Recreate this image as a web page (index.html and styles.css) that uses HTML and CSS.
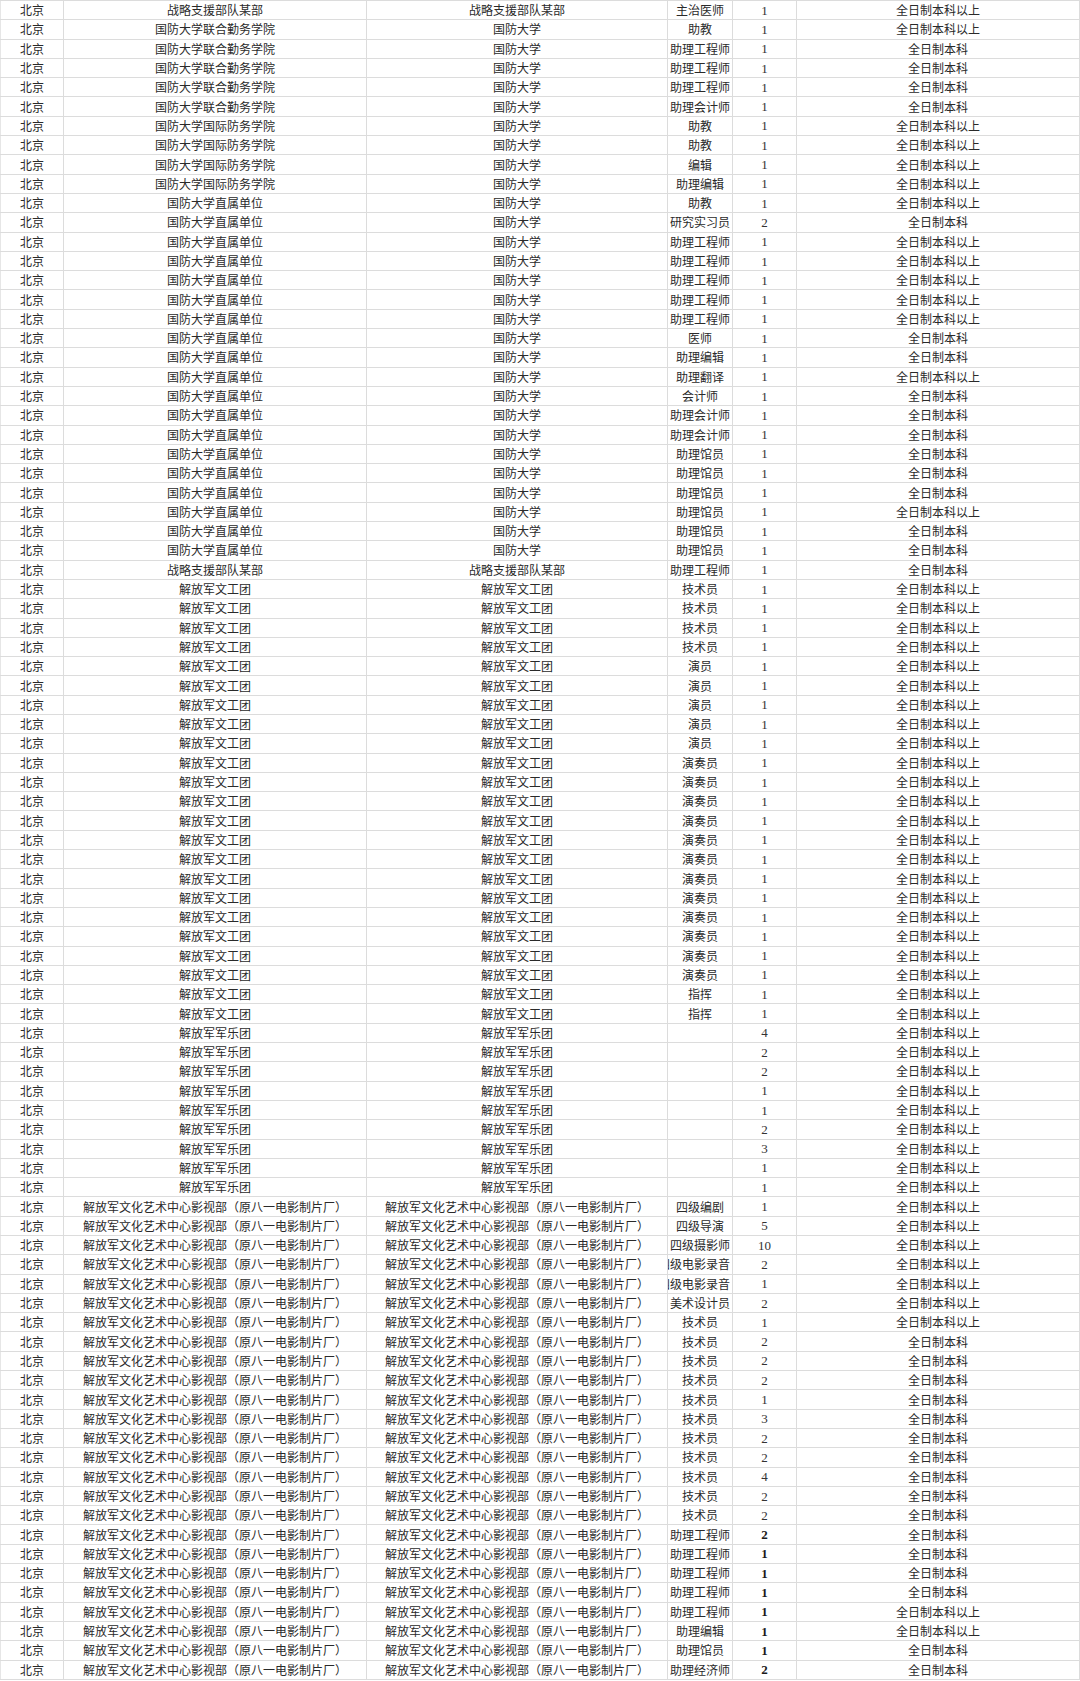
FILE: index.html
```html
<!DOCTYPE html>
<html lang="zh-CN">
<head>
<meta charset="utf-8">
<title>岗位表</title>
<link rel="stylesheet" href="styles.css">
</head>
<body>
<div class="sheet">
<div class="r"><span>北京</span><span>战略支援部队某部</span><span>战略支援部队某部</span><span>主治医师</span><span class="n">1</span><span>全日制本科以上</span></div>
<div class="r"><span>北京</span><span>国防大学联合勤务学院</span><span>国防大学</span><span>助教</span><span class="n">1</span><span>全日制本科以上</span></div>
<div class="r"><span>北京</span><span>国防大学联合勤务学院</span><span>国防大学</span><span>助理工程师</span><span class="n">1</span><span>全日制本科</span></div>
<div class="r"><span>北京</span><span>国防大学联合勤务学院</span><span>国防大学</span><span>助理工程师</span><span class="n">1</span><span>全日制本科</span></div>
<div class="r"><span>北京</span><span>国防大学联合勤务学院</span><span>国防大学</span><span>助理工程师</span><span class="n">1</span><span>全日制本科</span></div>
<div class="r"><span>北京</span><span>国防大学联合勤务学院</span><span>国防大学</span><span>助理会计师</span><span class="n">1</span><span>全日制本科</span></div>
<div class="r"><span>北京</span><span>国防大学国际防务学院</span><span>国防大学</span><span>助教</span><span class="n">1</span><span>全日制本科以上</span></div>
<div class="r"><span>北京</span><span>国防大学国际防务学院</span><span>国防大学</span><span>助教</span><span class="n">1</span><span>全日制本科以上</span></div>
<div class="r"><span>北京</span><span>国防大学国际防务学院</span><span>国防大学</span><span>编辑</span><span class="n">1</span><span>全日制本科以上</span></div>
<div class="r"><span>北京</span><span>国防大学国际防务学院</span><span>国防大学</span><span>助理编辑</span><span class="n">1</span><span>全日制本科以上</span></div>
<div class="r"><span>北京</span><span>国防大学直属单位</span><span>国防大学</span><span>助教</span><span class="n">1</span><span>全日制本科以上</span></div>
<div class="r"><span>北京</span><span>国防大学直属单位</span><span>国防大学</span><span>研究实习员</span><span class="n">2</span><span>全日制本科</span></div>
<div class="r"><span>北京</span><span>国防大学直属单位</span><span>国防大学</span><span>助理工程师</span><span class="n">1</span><span>全日制本科以上</span></div>
<div class="r"><span>北京</span><span>国防大学直属单位</span><span>国防大学</span><span>助理工程师</span><span class="n">1</span><span>全日制本科以上</span></div>
<div class="r"><span>北京</span><span>国防大学直属单位</span><span>国防大学</span><span>助理工程师</span><span class="n">1</span><span>全日制本科以上</span></div>
<div class="r"><span>北京</span><span>国防大学直属单位</span><span>国防大学</span><span>助理工程师</span><span class="n">1</span><span>全日制本科以上</span></div>
<div class="r"><span>北京</span><span>国防大学直属单位</span><span>国防大学</span><span>助理工程师</span><span class="n">1</span><span>全日制本科以上</span></div>
<div class="r"><span>北京</span><span>国防大学直属单位</span><span>国防大学</span><span>医师</span><span class="n">1</span><span>全日制本科</span></div>
<div class="r"><span>北京</span><span>国防大学直属单位</span><span>国防大学</span><span>助理编辑</span><span class="n">1</span><span>全日制本科</span></div>
<div class="r"><span>北京</span><span>国防大学直属单位</span><span>国防大学</span><span>助理翻译</span><span class="n">1</span><span>全日制本科以上</span></div>
<div class="r"><span>北京</span><span>国防大学直属单位</span><span>国防大学</span><span>会计师</span><span class="n">1</span><span>全日制本科</span></div>
<div class="r"><span>北京</span><span>国防大学直属单位</span><span>国防大学</span><span>助理会计师</span><span class="n">1</span><span>全日制本科</span></div>
<div class="r"><span>北京</span><span>国防大学直属单位</span><span>国防大学</span><span>助理会计师</span><span class="n">1</span><span>全日制本科</span></div>
<div class="r"><span>北京</span><span>国防大学直属单位</span><span>国防大学</span><span>助理馆员</span><span class="n">1</span><span>全日制本科</span></div>
<div class="r"><span>北京</span><span>国防大学直属单位</span><span>国防大学</span><span>助理馆员</span><span class="n">1</span><span>全日制本科</span></div>
<div class="r"><span>北京</span><span>国防大学直属单位</span><span>国防大学</span><span>助理馆员</span><span class="n">1</span><span>全日制本科</span></div>
<div class="r"><span>北京</span><span>国防大学直属单位</span><span>国防大学</span><span>助理馆员</span><span class="n">1</span><span>全日制本科以上</span></div>
<div class="r"><span>北京</span><span>国防大学直属单位</span><span>国防大学</span><span>助理馆员</span><span class="n">1</span><span>全日制本科</span></div>
<div class="r"><span>北京</span><span>国防大学直属单位</span><span>国防大学</span><span>助理馆员</span><span class="n">1</span><span>全日制本科</span></div>
<div class="r"><span>北京</span><span>战略支援部队某部</span><span>战略支援部队某部</span><span>助理工程师</span><span class="n">1</span><span>全日制本科</span></div>
<div class="r"><span>北京</span><span>解放军文工团</span><span>解放军文工团</span><span>技术员</span><span class="n">1</span><span>全日制本科以上</span></div>
<div class="r"><span>北京</span><span>解放军文工团</span><span>解放军文工团</span><span>技术员</span><span class="n">1</span><span>全日制本科以上</span></div>
<div class="r"><span>北京</span><span>解放军文工团</span><span>解放军文工团</span><span>技术员</span><span class="n">1</span><span>全日制本科以上</span></div>
<div class="r"><span>北京</span><span>解放军文工团</span><span>解放军文工团</span><span>技术员</span><span class="n">1</span><span>全日制本科以上</span></div>
<div class="r"><span>北京</span><span>解放军文工团</span><span>解放军文工团</span><span>演员</span><span class="n">1</span><span>全日制本科以上</span></div>
<div class="r"><span>北京</span><span>解放军文工团</span><span>解放军文工团</span><span>演员</span><span class="n">1</span><span>全日制本科以上</span></div>
<div class="r"><span>北京</span><span>解放军文工团</span><span>解放军文工团</span><span>演员</span><span class="n">1</span><span>全日制本科以上</span></div>
<div class="r"><span>北京</span><span>解放军文工团</span><span>解放军文工团</span><span>演员</span><span class="n">1</span><span>全日制本科以上</span></div>
<div class="r"><span>北京</span><span>解放军文工团</span><span>解放军文工团</span><span>演员</span><span class="n">1</span><span>全日制本科以上</span></div>
<div class="r"><span>北京</span><span>解放军文工团</span><span>解放军文工团</span><span>演奏员</span><span class="n">1</span><span>全日制本科以上</span></div>
<div class="r"><span>北京</span><span>解放军文工团</span><span>解放军文工团</span><span>演奏员</span><span class="n">1</span><span>全日制本科以上</span></div>
<div class="r"><span>北京</span><span>解放军文工团</span><span>解放军文工团</span><span>演奏员</span><span class="n">1</span><span>全日制本科以上</span></div>
<div class="r"><span>北京</span><span>解放军文工团</span><span>解放军文工团</span><span>演奏员</span><span class="n">1</span><span>全日制本科以上</span></div>
<div class="r"><span>北京</span><span>解放军文工团</span><span>解放军文工团</span><span>演奏员</span><span class="n">1</span><span>全日制本科以上</span></div>
<div class="r"><span>北京</span><span>解放军文工团</span><span>解放军文工团</span><span>演奏员</span><span class="n">1</span><span>全日制本科以上</span></div>
<div class="r"><span>北京</span><span>解放军文工团</span><span>解放军文工团</span><span>演奏员</span><span class="n">1</span><span>全日制本科以上</span></div>
<div class="r"><span>北京</span><span>解放军文工团</span><span>解放军文工团</span><span>演奏员</span><span class="n">1</span><span>全日制本科以上</span></div>
<div class="r"><span>北京</span><span>解放军文工团</span><span>解放军文工团</span><span>演奏员</span><span class="n">1</span><span>全日制本科以上</span></div>
<div class="r"><span>北京</span><span>解放军文工团</span><span>解放军文工团</span><span>演奏员</span><span class="n">1</span><span>全日制本科以上</span></div>
<div class="r"><span>北京</span><span>解放军文工团</span><span>解放军文工团</span><span>演奏员</span><span class="n">1</span><span>全日制本科以上</span></div>
<div class="r"><span>北京</span><span>解放军文工团</span><span>解放军文工团</span><span>演奏员</span><span class="n">1</span><span>全日制本科以上</span></div>
<div class="r"><span>北京</span><span>解放军文工团</span><span>解放军文工团</span><span>指挥</span><span class="n">1</span><span>全日制本科以上</span></div>
<div class="r"><span>北京</span><span>解放军文工团</span><span>解放军文工团</span><span>指挥</span><span class="n">1</span><span>全日制本科以上</span></div>
<div class="r"><span>北京</span><span>解放军军乐团</span><span>解放军军乐团</span><span></span><span class="n">4</span><span>全日制本科以上</span></div>
<div class="r"><span>北京</span><span>解放军军乐团</span><span>解放军军乐团</span><span></span><span class="n">2</span><span>全日制本科以上</span></div>
<div class="r"><span>北京</span><span>解放军军乐团</span><span>解放军军乐团</span><span></span><span class="n">2</span><span>全日制本科以上</span></div>
<div class="r"><span>北京</span><span>解放军军乐团</span><span>解放军军乐团</span><span></span><span class="n">1</span><span>全日制本科以上</span></div>
<div class="r"><span>北京</span><span>解放军军乐团</span><span>解放军军乐团</span><span></span><span class="n">1</span><span>全日制本科以上</span></div>
<div class="r"><span>北京</span><span>解放军军乐团</span><span>解放军军乐团</span><span></span><span class="n">2</span><span>全日制本科以上</span></div>
<div class="r"><span>北京</span><span>解放军军乐团</span><span>解放军军乐团</span><span></span><span class="n">3</span><span>全日制本科以上</span></div>
<div class="r"><span>北京</span><span>解放军军乐团</span><span>解放军军乐团</span><span></span><span class="n">1</span><span>全日制本科以上</span></div>
<div class="r"><span>北京</span><span>解放军军乐团</span><span>解放军军乐团</span><span></span><span class="n">1</span><span>全日制本科以上</span></div>
<div class="r"><span>北京</span><span>解放军文化艺术中心影视部（原八一电影制片厂）</span><span>解放军文化艺术中心影视部（原八一电影制片厂）</span><span>四级编剧</span><span class="n">1</span><span>全日制本科以上</span></div>
<div class="r"><span>北京</span><span>解放军文化艺术中心影视部（原八一电影制片厂）</span><span>解放军文化艺术中心影视部（原八一电影制片厂）</span><span>四级导演</span><span class="n">5</span><span>全日制本科以上</span></div>
<div class="r"><span>北京</span><span>解放军文化艺术中心影视部（原八一电影制片厂）</span><span>解放军文化艺术中心影视部（原八一电影制片厂）</span><span>四级摄影师</span><span class="n">10</span><span>全日制本科以上</span></div>
<div class="r"><span>北京</span><span>解放军文化艺术中心影视部（原八一电影制片厂）</span><span>解放军文化艺术中心影视部（原八一电影制片厂）</span><span class="ov">四级电影录音</span><span class="n">2</span><span>全日制本科以上</span></div>
<div class="r"><span>北京</span><span>解放军文化艺术中心影视部（原八一电影制片厂）</span><span>解放军文化艺术中心影视部（原八一电影制片厂）</span><span class="ov">四级电影录音</span><span class="n">1</span><span>全日制本科以上</span></div>
<div class="r"><span>北京</span><span>解放军文化艺术中心影视部（原八一电影制片厂）</span><span>解放军文化艺术中心影视部（原八一电影制片厂）</span><span>美术设计员</span><span class="n">2</span><span>全日制本科以上</span></div>
<div class="r"><span>北京</span><span>解放军文化艺术中心影视部（原八一电影制片厂）</span><span>解放军文化艺术中心影视部（原八一电影制片厂）</span><span>技术员</span><span class="n">1</span><span>全日制本科以上</span></div>
<div class="r"><span>北京</span><span>解放军文化艺术中心影视部（原八一电影制片厂）</span><span>解放军文化艺术中心影视部（原八一电影制片厂）</span><span>技术员</span><span class="n">2</span><span>全日制本科</span></div>
<div class="r"><span>北京</span><span>解放军文化艺术中心影视部（原八一电影制片厂）</span><span>解放军文化艺术中心影视部（原八一电影制片厂）</span><span>技术员</span><span class="n">2</span><span>全日制本科</span></div>
<div class="r"><span>北京</span><span>解放军文化艺术中心影视部（原八一电影制片厂）</span><span>解放军文化艺术中心影视部（原八一电影制片厂）</span><span>技术员</span><span class="n">2</span><span>全日制本科</span></div>
<div class="r"><span>北京</span><span>解放军文化艺术中心影视部（原八一电影制片厂）</span><span>解放军文化艺术中心影视部（原八一电影制片厂）</span><span>技术员</span><span class="n">1</span><span>全日制本科</span></div>
<div class="r"><span>北京</span><span>解放军文化艺术中心影视部（原八一电影制片厂）</span><span>解放军文化艺术中心影视部（原八一电影制片厂）</span><span>技术员</span><span class="n">3</span><span>全日制本科</span></div>
<div class="r"><span>北京</span><span>解放军文化艺术中心影视部（原八一电影制片厂）</span><span>解放军文化艺术中心影视部（原八一电影制片厂）</span><span>技术员</span><span class="n">2</span><span>全日制本科</span></div>
<div class="r"><span>北京</span><span>解放军文化艺术中心影视部（原八一电影制片厂）</span><span>解放军文化艺术中心影视部（原八一电影制片厂）</span><span>技术员</span><span class="n">2</span><span>全日制本科</span></div>
<div class="r"><span>北京</span><span>解放军文化艺术中心影视部（原八一电影制片厂）</span><span>解放军文化艺术中心影视部（原八一电影制片厂）</span><span>技术员</span><span class="n">4</span><span>全日制本科</span></div>
<div class="r"><span>北京</span><span>解放军文化艺术中心影视部（原八一电影制片厂）</span><span>解放军文化艺术中心影视部（原八一电影制片厂）</span><span>技术员</span><span class="n">2</span><span>全日制本科</span></div>
<div class="r"><span>北京</span><span>解放军文化艺术中心影视部（原八一电影制片厂）</span><span>解放军文化艺术中心影视部（原八一电影制片厂）</span><span>技术员</span><span class="n">2</span><span>全日制本科</span></div>
<div class="r"><span>北京</span><span>解放军文化艺术中心影视部（原八一电影制片厂）</span><span>解放军文化艺术中心影视部（原八一电影制片厂）</span><span>助理工程师</span><span class="n b">2</span><span>全日制本科</span></div>
<div class="r"><span>北京</span><span>解放军文化艺术中心影视部（原八一电影制片厂）</span><span>解放军文化艺术中心影视部（原八一电影制片厂）</span><span>助理工程师</span><span class="n b">1</span><span>全日制本科</span></div>
<div class="r"><span>北京</span><span>解放军文化艺术中心影视部（原八一电影制片厂）</span><span>解放军文化艺术中心影视部（原八一电影制片厂）</span><span>助理工程师</span><span class="n b">1</span><span>全日制本科</span></div>
<div class="r"><span>北京</span><span>解放军文化艺术中心影视部（原八一电影制片厂）</span><span>解放军文化艺术中心影视部（原八一电影制片厂）</span><span>助理工程师</span><span class="n b">1</span><span>全日制本科</span></div>
<div class="r"><span>北京</span><span>解放军文化艺术中心影视部（原八一电影制片厂）</span><span>解放军文化艺术中心影视部（原八一电影制片厂）</span><span>助理工程师</span><span class="n b">1</span><span>全日制本科以上</span></div>
<div class="r"><span>北京</span><span>解放军文化艺术中心影视部（原八一电影制片厂）</span><span>解放军文化艺术中心影视部（原八一电影制片厂）</span><span>助理编辑</span><span class="n b">1</span><span>全日制本科以上</span></div>
<div class="r"><span>北京</span><span>解放军文化艺术中心影视部（原八一电影制片厂）</span><span>解放军文化艺术中心影视部（原八一电影制片厂）</span><span>助理馆员</span><span class="n b">1</span><span>全日制本科</span></div>
<div class="r"><span>北京</span><span>解放军文化艺术中心影视部（原八一电影制片厂）</span><span>解放军文化艺术中心影视部（原八一电影制片厂）</span><span>助理经济师</span><span class="n b">2</span><span>全日制本科</span></div>
</div>
</body>
</html>
```

FILE: styles.css
```css
html, body {
  margin: 0;
  padding: 0;
  background: #ffffff;
}

body {
  font-family: "Noto Sans CJK SC", "Noto Sans", sans-serif;
  font-size: 12px;
  color: #2a2a2a;
}

.sheet {
  width: 1080px;
  border-top: 1px solid #dcdcdc;
  box-sizing: border-box;
}

.r {
  display: grid;
  grid-template-columns: 64px 303px 301px 65px 64px 283px;
  height: calc(1680px / 87);
  box-sizing: border-box;
  border-bottom: 1px solid #dcdcdc;
}

.r > span {
  display: flex;
  align-items: center;
  justify-content: center;
  overflow: hidden;
  white-space: nowrap;
  border-right: 1px solid #dcdcdc;
  line-height: 1;
  min-width: 0;
}

.r > span:first-child {
  border-left: 1px solid #e6e6e6;
}

.r > span.ov {
  justify-content: flex-end;
  padding-right: 2px;
}

.n {
  font-family: "Liberation Serif", "DejaVu Serif", serif;
  font-size: 13px;
  color: #333333;
}

.n.b {
  font-weight: bold;
  color: #1a1a1a;
}
```
